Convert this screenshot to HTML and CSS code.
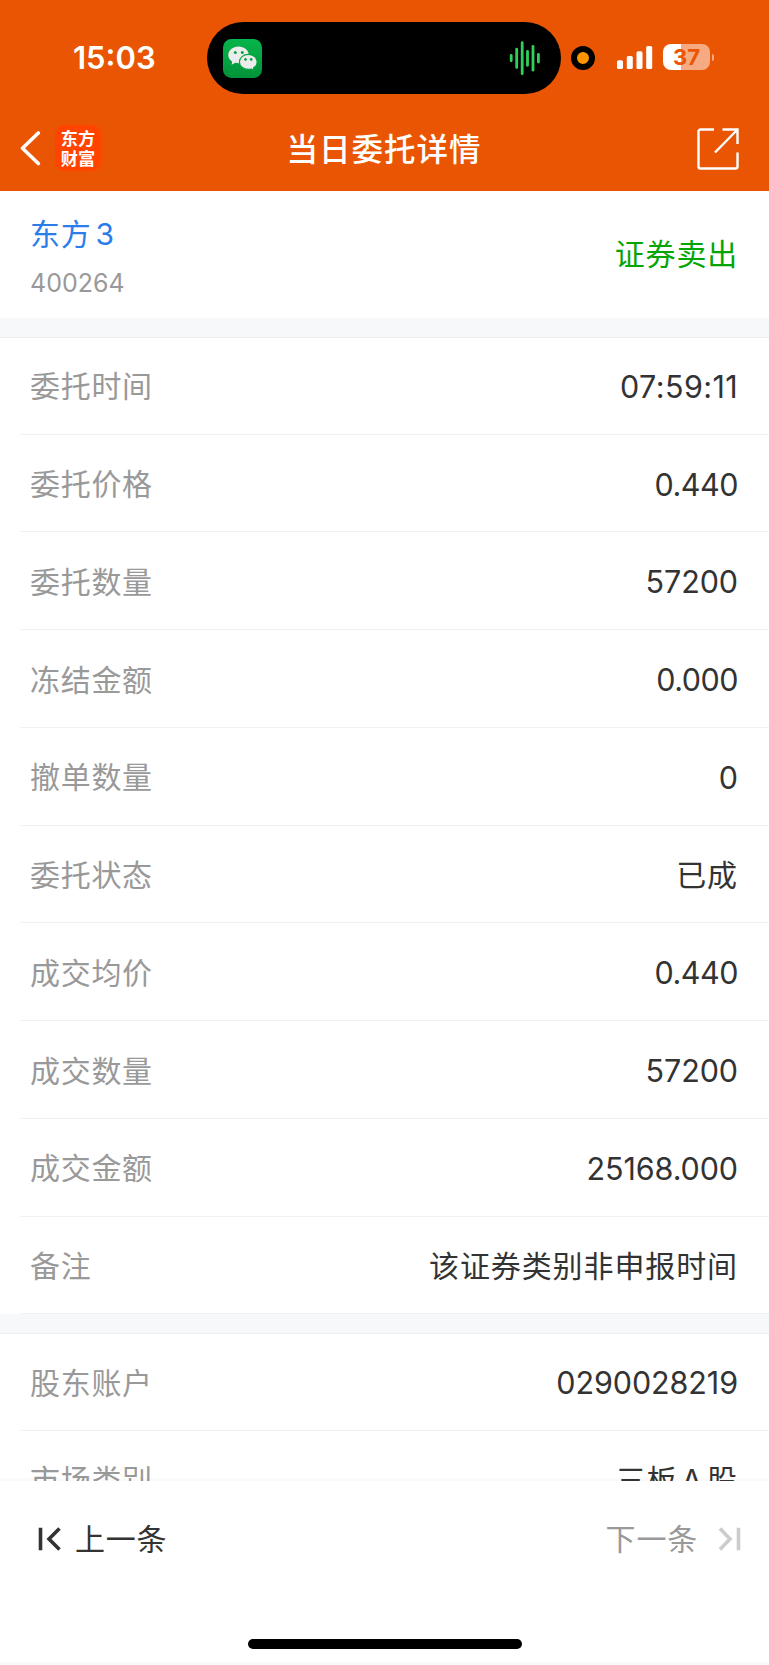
FILE: index.html
```
<!DOCTYPE html>
<html lang="zh-CN">

<head>
    <meta charset="UTF-8">
    <meta name="viewport" content="width=device-width, initial-scale=1.0">
    <title>当日委托详情</title>
    <link rel="stylesheet" href="styles.css">
</head>

<body>
    <div class="page">
        <!-- 顶部 -->
        <div class="header">
            <div class="status_bar">
                <div class="clock">15:03</div>
                <div class="island">
                    <svg class="wechat" width="39" height="39" viewBox="0 0 39 39">
                        <defs>
                            <linearGradient id="green" x1="0" y1="0" x2="0" y2="1">
                                <stop offset="0" stop-color="#06b54b" />
                                <stop offset="1" stop-color="#039238" />
                            </linearGradient>
                        </defs>
                        <rect width="39" height="39" rx="8.5" fill="url(#green)" />
                        <path d="M15.5 7.5C9.8 7.5 5.3 11.3 5.3 16c0 2.8 1.5 5.1 3.9 6.7L8.6 25.7l3.7-1.9c1 .3 2.1.4 3.2.4 5.7 0 10.3-3.6 10.3-8.2S21.2 7.5 15.5 7.5z" fill="#ececec" />
                        <path d="M25.3 15.4c-4.9 0-8.9 3.4-8.9 7.5s4 7.5 8.9 7.5c1 0 1.9-.1 2.7-.4l3.1 1.6-.6-2.5c2.2-1.4 3.7-3.7 3.7-6.2 0-4.1-4-7.5-8.9-7.5z" fill="#ececec" stroke="#04a441" stroke-width="1.2" />
                        <circle cx="12.3" cy="13.4" r="1.5" fill="#04a642" />
                        <circle cx="19.3" cy="13.4" r="1.5" fill="#04a642" />
                        <circle cx="22.5" cy="20.4" r="1.3" fill="#04a040" />
                        <circle cx="28.2" cy="20.4" r="1.3" fill="#04a040" />
                    </svg>
                    <svg class="wave" width="32" height="36" viewBox="0 0 32 36">
                        <path d="M2.2 15.5v5.3M7.7 9.2v18.2M13.2 2.7v31M18.5 11.3v14M24 6.5v23.7M29.4 14.3v7.7" stroke="#30d158" stroke-width="2.8" stroke-linecap="round" />
                    </svg>
                </div>
                <div class="mic_dot"></div>
                <svg class="signal" width="36" height="23" viewBox="0 0 36 23" fill="#fff">
                    <rect x="0" y="14.3" width="6" height="8.7" rx="1.6" />
                    <rect x="9.8" y="10" width="6" height="13" rx="1.6" />
                    <rect x="19.5" y="5.3" width="6" height="17.7" rx="1.6" />
                    <rect x="29.2" y="0" width="6" height="23" rx="1.6" />
                </svg>
                <div class="battery">37</div>
                <div class="battery_cap"></div>
            </div>
            <div class="nav">
                <svg width="22" height="36" viewBox="0 0 22 36" fill="none">
                    <path d="M19.3 3L3.5 18.3L19.3 33.5" stroke="#fff" stroke-width="3.6" stroke-linecap="round" stroke-linejoin="round" />
                </svg>
                <div class="logo">
                    <div>东方</div>
                    <div>财富</div>
                </div>
                <div class="title">当日委托详情</div>
                <svg class="share" width="42" height="42" viewBox="0 0 42 42" fill="none" stroke="#fff" stroke-width="2.4">
                    <path d="M17 1.5H3.5a2 2 0 0 0-2 2v35a2 2 0 0 0 2 2h35a2 2 0 0 0 2-2V24.5" />
                    <path d="M25.5 1.5h15V16M40 2L18 24.5" />
                </svg>
            </div>
        </div>

        <!-- 股票 -->
        <div class="stock">
            <div>
                <div class="name">东方<span class="num">3</span></div>
                <div class="code">400264</div>
            </div>
            <div class="side">证券卖出</div>
        </div>

        <!-- 委托明细 -->
        <div class="list">
            <div class="row"><span class="label">委托时间</span><span class="num time">07:59:11</span></div>
            <div class="row"><span class="label">委托价格</span><span class="num price">0.440</span></div>
            <div class="row"><span class="label">委托数量</span><span class="num">57200</span></div>
            <div class="row"><span class="label">冻结金额</span><span class="num price">0.000</span></div>
            <div class="row"><span class="label">撤单数量</span><span class="num">0</span></div>
            <div class="row"><span class="label">委托状态</span><span class="text">已成</span></div>
            <div class="row"><span class="label">成交均价</span><span class="num price">0.440</span></div>
            <div class="row"><span class="label">成交数量</span><span class="num">57200</span></div>
            <div class="row"><span class="label">成交金额</span><span class="num">25168.000</span></div>
            <div class="row"><span class="label">备注</span><span class="text">该证券类别非申报时间</span></div>
        </div>
        <div class="list">
            <div class="row"><span class="label">股东账户</span><span class="num">0290028219</span></div>
            <div class="row"><span class="label">市场类别</span><span class="text">三板<span class="letter">A</span>股</span></div>
        </div>

        <!-- 底部切换 -->
        <div class="footer">
            <div class="pager">
                <div class="prev">
                    <svg width="24" height="24" viewBox="0 0 24 24" fill="none" stroke="#333" stroke-width="3.6">
                        <path d="M3.5 .7v22.6M22.5 1.5L12 12l10.5 10.5" />
                    </svg>
                    <span>上一条</span>
                </div>
                <div class="next">
                    <span>下一条</span>
                    <svg width="24" height="24" viewBox="0 0 24 24" fill="none" stroke="#ccc" stroke-width="3.6">
                        <path d="M21.5 .7v22.6M3 1.5L13 12L3 22.5" />
                    </svg>
                </div>
            </div>
            <div class="home_bar"></div>
        </div>
    </div>
</body>

</html>
```
FILE: styles.css
```
* {
    margin: 0;
    padding: 0;
    box-sizing: border-box;
}
body {
    font-family: Inter, "Noto Sans CJK SC", sans-serif;
    font-size: 30px;
    color: #333;
    background-color: #fff;
}
svg {
    flex-shrink: 0;
}
.page {
    display: flex;
    flex-direction: column;
    height: 1665px;
    overflow: hidden;
}

.header {
    height: 191px;
    flex-shrink: 0;
    background-color: #ea5504;
    color: #fff;
}
.status_bar {
    display: flex;
    align-items: center;
    height: 116px;
}
.clock {
    width: 207px;
    padding: 0 0 2px 73px;
    font-size: 31px;
    font-weight: 600;
}
.island {
    display: flex;
    align-items: center;
    justify-content: space-between;
    width: 354px;
    height: 72px;
    padding: 0 20px 0 16px;
    border-radius: 36px;
    background-color: #000;
}
.mic_dot {
    width: 24px;
    height: 24px;
    margin-left: 10px;
    border: 6px solid #000;
    border-radius: 50%;
    background-color: #ff9500;
}
.signal {
    margin: 0 0 1px 21.5px;
}
.battery {
    width: 47px;
    height: 26px;
    margin: 0 0 2px 10.5px;
    border-radius: 8px;
    background: linear-gradient(to right, #fff 18px, #f5aa82 18px);
    color: #ea5504;
    font-size: 22px;
    font-weight: 700;
    line-height: 26px;
    text-align: center;
}
.battery_cap {
    width: 2px;
    height: 7px;
    margin: 0 0 2px 2px;
    border-radius: 0 2px 2px 0;
    background-color: #f5aa82;
}

.nav {
    display: flex;
    align-items: center;
    height: 64px;
    padding: 0 30px 0 19px;
}
.logo {
    width: 46px;
    height: 46px;
    margin-left: 14px;
    padding-top: 4px;
    border-radius: 9px;
    background-color: #ff4400;
    font-family: "Liberation Sans", "Noto Sans CJK SC", sans-serif;
    font-size: 17.2px;
    font-weight: 700;
    line-height: 20px;
    text-align: center;
}
.title {
    margin-left: 185.5px;
    padding-bottom: 3px;
    font-size: 31.5px;
    font-weight: 500;
    letter-spacing: 1px;
}
.share {
    margin: 2px 0 0 auto;
}

.stock {
    display: flex;
    align-items: center;
    justify-content: space-between;
    flex-shrink: 0;
    height: 127px;
    padding: 0 31px 0 30px;
}
.name {
    padding-top: 4px;
    color: #2b7de9;
    line-height: 44px;
    letter-spacing: .8px;
}
.name .num {
    margin-left: 4px;
}
.code {
    margin-top: 9px;
    color: #999;
    font-size: 25px;
    line-height: 36px;
}
.side {
    padding-bottom: 6px;
    color: #05a505;
    letter-spacing: .8px;
}

.list {
    flex-shrink: 0;
    border-top: 19px solid #f6f8fa;
    box-shadow: inset 0 1px 0 #eee;
}
.row {
    display: flex;
    align-items: center;
    justify-content: space-between;
    height: 97.74px;
    margin-left: 20px;
    padding: 0 31px 0 10px;
    border-bottom: 1px solid #f1f1f1;
}
.label {
    padding-bottom: 2px;
    color: #999;
    letter-spacing: .7px;
}
.row .num {
    padding-top: 2px;
    font-size: 30.5px;
    letter-spacing: -.1px;
}
.row .time {
    letter-spacing: .4px;
}
.row .price {
    letter-spacing: -.5px;
}
.text {
    padding-bottom: 2px;
    letter-spacing: .9px;
}
.letter {
    margin: 0 4px;
}

/* 固定在底部,盖住列表 */
.footer {
    position: absolute;
    left: 0;
    top: 1478px;
    width: 100%;
    height: 187px;
    border-top: 3px solid rgba(0, 0, 0, 0.02);
    border-bottom: 3px solid #f9f9f9;
    background-color: #fff;
    background-clip: padding-box;
}
.pager {
    display: flex;
    justify-content: space-between;
    height: 116px;
    padding: 0 28px 0 37px;
}
.prev, .next {
    display: flex;
    align-items: center;
    letter-spacing: .8px;
}
.prev span, .next span {
    padding-bottom: 4px;
}
.prev {
    gap: 14px;
}
.next {
    gap: 19px;
    color: #999;
}
.home_bar {
    width: 274px;
    height: 10px;
    margin: 42px auto 0;
    border-radius: 5px;
    background-color: #000;
}
```
